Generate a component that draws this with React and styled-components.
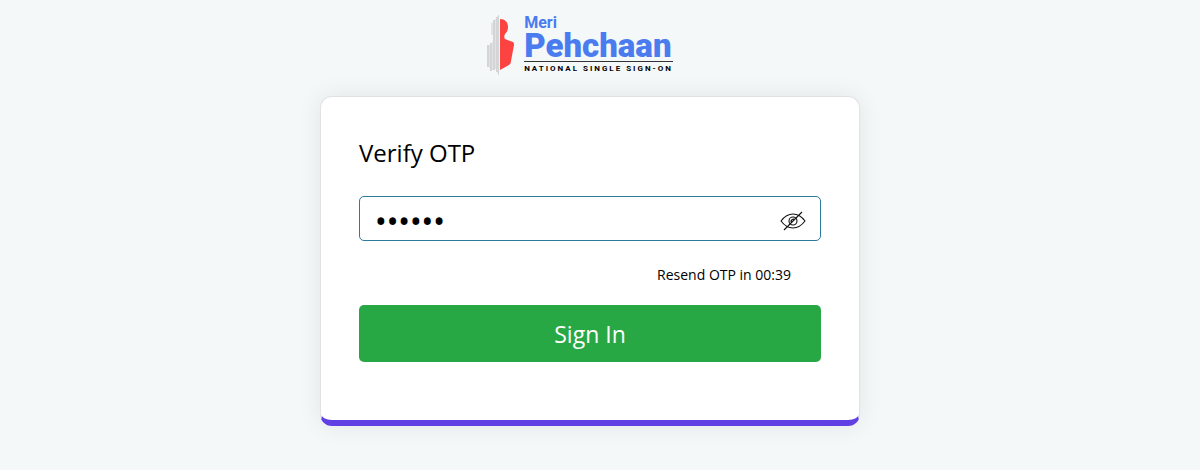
import React, { useState } from "react";
import styled, { createGlobalStyle } from "styled-components";

const GlobalStyle = createGlobalStyle`
  * { box-sizing: border-box; }
  body {
    margin: 0;
    background: #f4f8f9;
    color: #000;
    font-family: "Open Sans", "Noto Sans", sans-serif;
  }
`;

const Page = styled.main`
  display: flex;
  flex-direction: column;
  align-items: center;
  padding: 14px 20px 44px 0;
`;

const Brand = styled.header`
  display: flex;
  gap: 8px;
  margin: 0 20px 20px 0;
`;

const BrandMark = styled.svg`
  width: 29px;
  height: 62px;
`;

const BrandText = styled.div`
  display: flex;
  flex-direction: column;
  font-family: Roboto, "Liberation Sans", sans-serif;
  font-weight: 700;
`;

const BrandTop = styled.span`
  font-size: 16px;
  line-height: 17px;
  color: #4a7cf0;
`;

const BrandName = styled.span`
  font-size: 33px;
  line-height: 30px;
  font-weight: 900;
  color: #4a7cf0;
`;

const BrandTagline = styled.span`
  border-top: 1px solid #333;
  padding-top: 2px;
  font-size: 8px;
  line-height: 10px;
  letter-spacing: 2px;
  white-space: nowrap;
`;

const Card = styled.form`
  width: 100%;
  max-width: 540px;
  padding: 38px 38px 58px;
  background: #fff;
  border: 1px solid #e0e2e4;
  border-bottom: 6px solid #6040e4;
  border-radius: 12px;
  box-shadow: 0 0 24px rgba(0, 0, 0, 0.08);
`;

const Title = styled.h1`
  margin: 0 0 25px;
  font-size: 24px;
  line-height: 36px;
  font-weight: 400;
`;

const Field = styled.div`
  display: flex;
  align-items: center;
  height: 45px;
  padding: 0 14px 0 15px;
  border: 1px solid #2c7a9c;
  border-radius: 5px;
`;

const OtpInput = styled.input`
  flex: 1;
  min-width: 0;
  height: 43px;
  padding: 5px 0 0;
  border: 0;
  outline: 0;
  background: transparent;
  color: #000;
  font-family: "Noto Sans", sans-serif;
  font-size: 31px;
`;

const ToggleButton = styled.button`
  display: flex;
  padding: 4px 0 0;
  border: 0;
  background: none;
  cursor: pointer;
`;

const Resend = styled.p`
  margin: 24px 30px 20px;
  font-size: 14px;
  line-height: 20px;
  text-align: right;
`;

const SubmitButton = styled.button`
  width: 100%;
  height: 57px;
  padding: 0;
  border: 0;
  border-radius: 5px;
  background: #28a745;
  color: #fff;
  font-family: inherit;
  font-size: 23px;
  cursor: pointer;
`;

function PersonMark() {
  return (
    <BrandMark viewBox="0 0 29 62" aria-hidden="true">
      <g fill="#d3d5d7">
        <path d="M0 31h2v22H0zM3 29h2v28H3zM6 6h2v50H6zM9 3h2v55H9zM11 1h1v60h-1z" />
        <path d="M2 31h1v23H2zM5 28h1v28H5zM8 5h1v50H8zM4 9h2v12H4zM10 2h1v57h-1z" opacity=".6" />
      </g>
      <path
        fill="#fb4342"
        d="M13 5c5 0 8 3 8 8 0 3-1 5-3 7-1 2-1 4 0 5l8 3c1 1 1 2 1 3l-3 16c0 2-1 3-2 4l-9 5z"
      />
    </BrandMark>
  );
}

function EyeOff() {
  return (
    <svg width="26" height="20" viewBox="0 0 26 20" fill="none" stroke="#111" strokeWidth="1.1" aria-hidden="true">
      <path d="M1 10c3-4 7-7 12-7s9 3 12 7c-3 4-7 7-12 7S4 14 1 10Z" />
      <circle cx="13" cy="10" r="4" />
      <path d="M11 11c0-2 1-3 3-3M4 19 22 1" />
    </svg>
  );
}

export default function App() {
  const [code, setCode] = useState("482915");
  const [visible, setVisible] = useState(false);
  return (
    <>
      <GlobalStyle />
      <Page>
        <Brand>
          <PersonMark />
          <BrandText>
            <BrandTop>Meri</BrandTop>
            <BrandName>Pehchaan</BrandName>
            <BrandTagline>NATIONAL SINGLE SIGN-ON</BrandTagline>
          </BrandText>
        </Brand>
        <Card onSubmit={(e) => e.preventDefault()}>
          <Title>
            <label htmlFor="otp">Verify OTP</label>
          </Title>
          <Field>
            <OtpInput
              id="otp"
              type={visible ? "text" : "password"}
              value={code}
              maxLength={6}
              autoComplete="one-time-code"
              onChange={(e) => setCode(e.target.value)}
            />
            <ToggleButton type="button" aria-label="Show OTP" onClick={() => setVisible(!visible)}>
              <EyeOff />
            </ToggleButton>
          </Field>
          <Resend>Resend OTP in 00:39</Resend>
          <SubmitButton type="submit">Sign In</SubmitButton>
        </Card>
      </Page>
    </>
  );
}
